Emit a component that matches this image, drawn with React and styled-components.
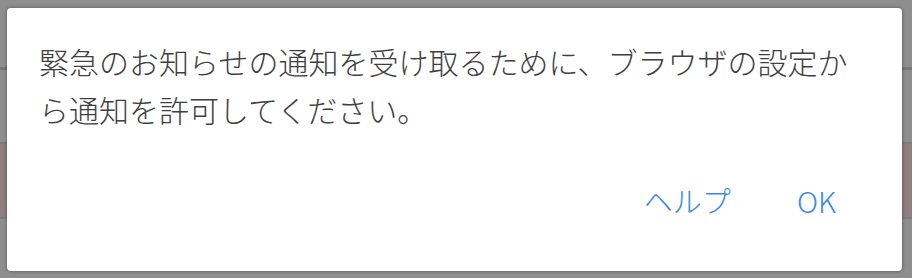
import React from "react";
import styled, { createGlobalStyle } from "styled-components";

const GlobalStyle = createGlobalStyle`
  html, body {
    margin: 0;
    padding: 0;
  }
  body {
    font-family: "Noto Sans CJK JP", "Noto Sans", sans-serif;
  }
`;

const Backdrop = styled.div`
  box-sizing: border-box;
  width: 912px;
  height: 278px;
  padding: 8px 10px 7px 7px;
  display: flex;
  background: linear-gradient(
    to bottom,
    #8e8e8e 0,
    #8e8e8e 67px,
    #787878 67px,
    #787878 70px,
    #8e8e8e 70px,
    #8e8e8e 142px,
    #7c7c7c 142px,
    #7c7c7c 144px,
    #8f7f7f 144px,
    #8f7f7f 217px,
    #7c7c7c 217px,
    #7c7c7c 219px,
    #8e8e8e 219px
  );
`;

const Dialog = styled.div`
  flex: 1;
  display: flex;
  flex-direction: column;
  background: #fff;
  border-radius: 4px;
  box-shadow: 0 0 3px 1px rgba(0, 0, 0, 0.25);
  padding: 29px 34px 51px 32px;
`;

const Message = styled.p`
  margin: 0;
  font-size: 30px;
  line-height: 48px;
  font-weight: 300;
  color: #404040;
`;

const Actions = styled.div`
  margin-top: auto;
  display: flex;
  justify-content: flex-end;
  gap: 34px;
  padding-right: 16px;
`;

const TextButton = styled.button`
  border: none;
  background: none;
  padding: 0 16px;
  font-family: inherit;
  font-size: 29px;
  line-height: 40px;
  font-weight: 300;
  color: #3a8be0;
  cursor: pointer;
`;

export default function App() {
  return (
    <>
      <GlobalStyle />
      <Backdrop>
        <Dialog>
          <Message>
            緊急のお知らせの通知を受け取るために、ブラウザの設定から通知を許可してください。
          </Message>
          <Actions>
            <TextButton>ヘルプ</TextButton>
            <TextButton>OK</TextButton>
          </Actions>
        </Dialog>
      </Backdrop>
    </>
  );
}
